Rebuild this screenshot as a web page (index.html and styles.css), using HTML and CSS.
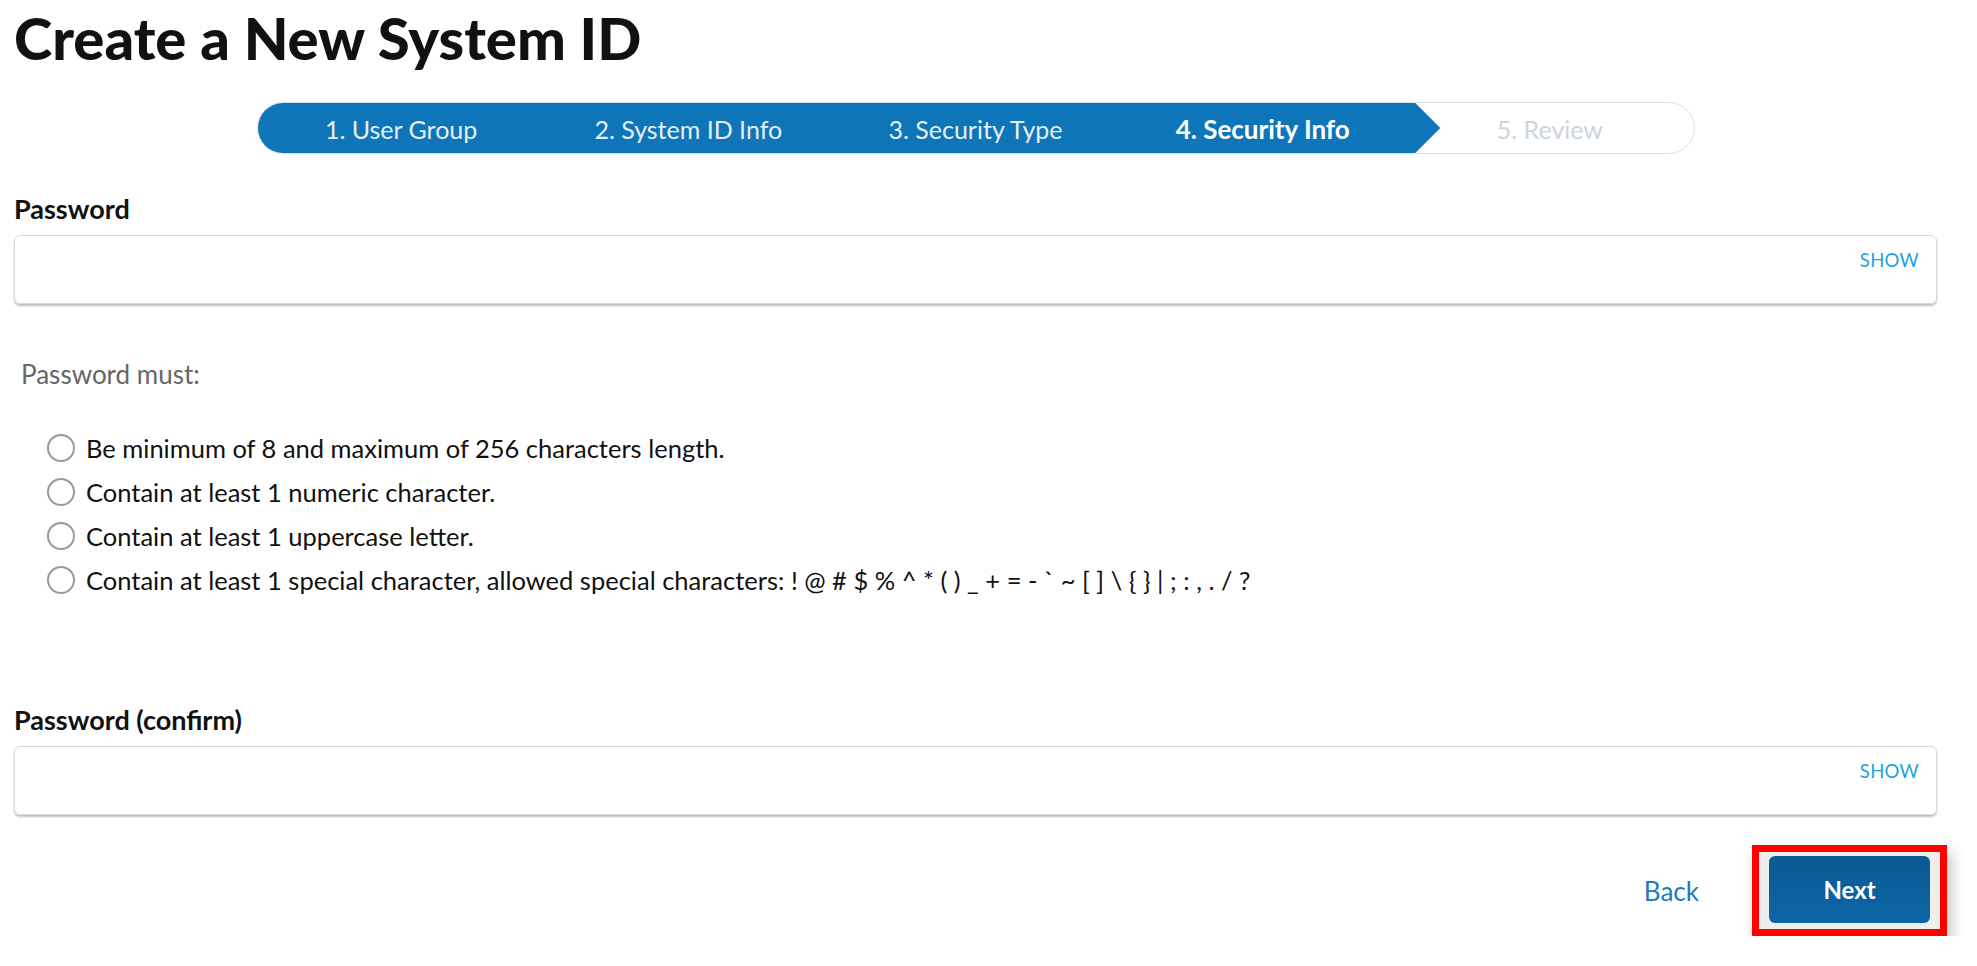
FILE: index.html
```html
<!DOCTYPE html>
<html>
<head>
    <title>Create a New System ID</title>
    <link rel="stylesheet" href="styles.css">
</head>
<body>
    <div class="page">
        <h1>Create a New System ID</h1>

        <div class="stepper">
            <div class="step done">1. User Group</div>
            <div class="step done">2. System ID Info</div>
            <div class="step done">3. Security Type</div>
            <div class="step active">4. Security Info</div>
            <div class="step todo">5. Review</div>
        </div>

        <div class="field">
            <label for="password">Password</label>
            <div class="input-box">
                <input type="password" id="password" name="password">
                <span class="show">SHOW</span>
            </div>
        </div>

        <p class="rules-title">Password must:</p>
        <ul class="rules">
            <li><span class="radio"></span>Be minimum of 8 and maximum of 256 characters length.</li>
            <li><span class="radio"></span>Contain at least 1 numeric character.</li>
            <li><span class="radio"></span>Contain at least 1 uppercase letter.</li>
            <li><span class="radio"></span>Contain at least 1 special character, allowed special characters: ! @ # $ % ^ * ( ) _ + = - ` ~ [ ] \ { } | ; : , . / ?</li>
        </ul>

        <div class="field confirm">
            <label for="password2">Password (confirm)</label>
            <div class="input-box">
                <input type="password" id="password2" name="password2">
                <span class="show">SHOW</span>
            </div>
        </div>

        <div class="actions">
            <a class="back-link" href="#">Back</a>
            <div class="highlight">
                <button class="next-btn">Next</button>
            </div>
        </div>
    </div>
</body>
</html>
```

FILE: styles.css
```css
body {
    margin: 0;
    font-family: Lato, "Liberation Sans", sans-serif;
    color: #111;
    background: #fff;
}
.page {
    padding: 0 40px 0 14px;
}
h1 {
    margin: 0;
    padding-top: 6px;
    font-size: 58px;
    font-weight: 900;
    line-height: 64px;
    color: #111;
}
.stepper {
    display: flex;
    width: 1436px;
    height: 50px;
    margin: 32px auto 0;
    border: 1px solid #d5e1ea;
    border-radius: 27px;
    overflow: hidden;
}
.step {
    flex: 1;
    text-align: center;
    line-height: 52px;
    font-size: 25px;
}
.step.done {
    background-color: #0e76b8;
    color: #e6eef5;
}
.step.active {
    position: relative;
    background-color: #0e76b8;
    color: #fff;
    font-size: 26px;
    font-weight: 700;
}
.step.active::after {
    content: '';
    position: absolute;
    top: 0;
    right: -35px;
    width: 36px;
    height: 100%;
    background-color: #0e76b8;
    clip-path: polygon(0 0, 10px 0, 35px 50%, 10px 100%, 0 100%);
}
.step.todo {
    color: #c9d6e0;
}
.field {
    margin-top: 40px;
}
.field label {
    display: block;
    font-size: 27px;
    font-weight: 700;
    line-height: 30px;
    margin-bottom: 11px;
}
.input-box {
    display: flex;
    align-items: flex-start;
    height: 67px;
    border: 1px solid #d9d9d9;
    border-radius: 6px;
    box-shadow: 0 2px 2px rgba(0, 0, 0, 0.25);
}
.input-box input {
    flex: 1;
    border: none;
    outline: none;
    background: transparent;
    height: 60px;
    padding: 0 16px;
    font-size: 20px;
}
.show {
    padding: 13px 17px 0 10px;
    font-size: 18.5px;
    color: #1aa3dd;
    letter-spacing: 0.3px;
}
.rules-title {
    margin: 56px 0 0 7px;
    font-size: 26px;
    line-height: 28px;
    color: #666;
}
.rules {
    list-style: none;
    margin: 38px 0 0;
    padding: 0 0 0 33px;
}
.rules li {
    display: flex;
    align-items: center;
    height: 44px;
    font-size: 25.5px;
}
.radio {
    width: 24px;
    height: 24px;
    border: 2px solid #9a9a9a;
    border-radius: 50%;
    margin-right: 11px;
    flex-shrink: 0;
}
.field.confirm {
    margin-top: 103px;
}
.actions {
    display: flex;
    justify-content: flex-end;
    align-items: center;
    margin-top: 30px;
}
.back-link {
    font-size: 26px;
    color: #1b7cc1;
    text-decoration: none;
    margin-right: 53px;
}
.highlight {
    border: 7px solid #ff0000;
    padding: 4px 10px 6px 10px;
    background: #eee;
    box-shadow: 4px 8px 14px rgba(0, 0, 0, 0.25);
    margin-right: -10px;
}
.next-btn {
    display: block;
    width: 161px;
    height: 67px;
    border: none;
    border-radius: 6px;
    background: linear-gradient(#0a5a93, #0d66a6);
    color: #fff;
    font-family: Lato, "Liberation Sans", sans-serif;
    font-size: 24px;
    font-weight: 700;
    cursor: pointer;
}
```
